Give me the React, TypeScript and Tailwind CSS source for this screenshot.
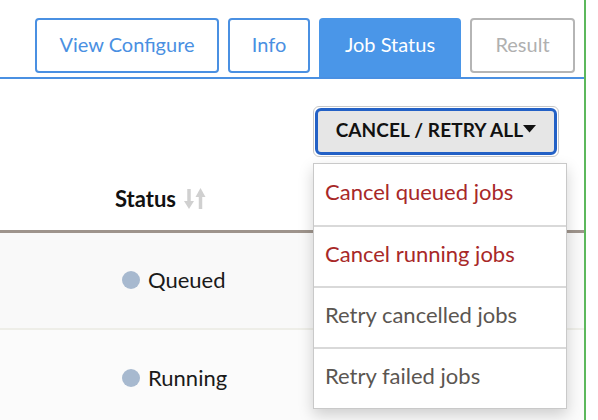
import React from 'react';

const tabs = [
  { label: 'View Configure', w: 'w-[184px]', kind: 'link' },
  { label: 'Info', w: 'w-[82px]', kind: 'link' },
  { label: 'Job Status', w: 'w-[142px]', kind: 'active' },
  { label: 'Result', w: 'w-[105px]', kind: 'disabled' },
];

const actions = [
  { label: 'Cancel queued jobs', danger: true },
  { label: 'Cancel running jobs', danger: true },
  { label: 'Retry cancelled jobs', danger: false },
  { label: 'Retry failed jobs', danger: false },
];

const rows = ['Queued', 'Running'];

function SortIcon() {
  return (
    <svg width="22" height="22" viewBox="0 0 22 22" className="ml-[8px] mb-[1px]" aria-hidden>
      <path d="M5 1v14" stroke="#d0d0d0" strokeWidth="3.5" />
      <path d="M0 13L5 21l5-8z" fill="#d0d0d0" />
      <path d="M16.5 21V7" stroke="#d0d0d0" strokeWidth="3.5" />
      <path d="M11.5 9L16.5 0l5 9z" fill="#d0d0d0" />
    </svg>
  );
}

export default function App() {
  return (
    <div
      className="flex h-[420px] w-[598px] overflow-hidden bg-white"
      style={{ fontFamily: 'Lato, "Open Sans", sans-serif' }}
    >
      <div className="relative w-[586px] shrink-0 border-r-2 border-[#5cb85c]">
        {/* tabs */}
        <div className="flex h-[79px] items-start gap-[9px] border-b-2 border-[#4a90e2] pl-[35px] pt-[18px]">
          {tabs.map((t) => (
            <div
              key={t.label}
              className={
                t.kind === 'active'
                  ? `${t.w} flex h-[59px] items-center justify-center rounded-t-[4px] bg-[#4a96e8] pb-[8px] text-[20px] text-white`
                  : t.kind === 'disabled'
                    ? `${t.w} flex h-[55px] items-center justify-center rounded-[4px] border-2 border-[#b5b5b5] pb-[4px] text-[20px] text-[#b0b0b0]`
                    : `${t.w} flex h-[55px] items-center justify-center rounded-[4px] border-2 border-[#4a90e2] pb-[4px] text-[20px] text-[#4a90e2]`
              }
            >
              {t.label}
            </div>
          ))}
        </div>

        {/* toolbar */}
        <div className="pt-[27px]">
          <div className="relative ml-[313px] h-[51px] w-[246px] rounded-[6px] border border-[#c8c8c8]">
            <button
              type="button"
              className="absolute inset-[1px] flex items-center justify-center rounded-[6px] border-[3px] border-[#2361c6] bg-[#e6e6e6] pb-[3px] text-[19px] font-bold tracking-[0.1px] text-[#111]"
            >
              CANCEL / RETRY ALL
              <svg width="13" height="8" viewBox="0 0 13 8" className="mb-[3px]" aria-hidden>
                <path d="M0 0h13L6.5 7.5z" fill="#111" />
              </svg>
            </button>

            <div className="absolute left-[-1px] top-[56px] z-10 w-[254px] border border-[#c9c9c9] bg-white shadow-[0_6px_14px_rgba(0,0,0,0.18)]">
              {actions.map((a, i) => (
                <div
                  key={a.label}
                  className={`flex h-[61px] items-center pb-[7px] pl-[11px] text-[22px] ${
                    i > 0 ? 'border-t-2 border-[#d9d9d9]' : ''
                  } ${a.danger ? 'text-[#a82828]' : 'text-[#5b5651]'}`}
                >
                  {a.label}
                </div>
              ))}
            </div>
          </div>
        </div>

        {/* table */}
        <div>
          <div className="flex h-[76px] items-end border-b-[3px] border-[#9e948c] pb-[19px] pl-[115px]">
            <span className="text-[22px] font-bold leading-[24px] text-[#111]">Status</span>
            <SortIcon />
          </div>
          {rows.map((r, i) => (
            <div
              key={r}
              className={`flex h-[97px] items-center pb-[2px] pl-[122px] ${
                i === 0 ? 'border-b-2 border-[#eeeee8] bg-[#f9f9f9]' : 'bg-[#fbfbfb]'
              }`}
            >
              <span className="h-[18px] w-[18px] rounded-full bg-[#a7b9cf]" />
              <span className="ml-[8px] text-[22px] text-[#1a1a1a]">{r}</span>
            </div>
          ))}
        </div>
      </div>
      <div className="flex-1 bg-white" />
    </div>
  );
}
